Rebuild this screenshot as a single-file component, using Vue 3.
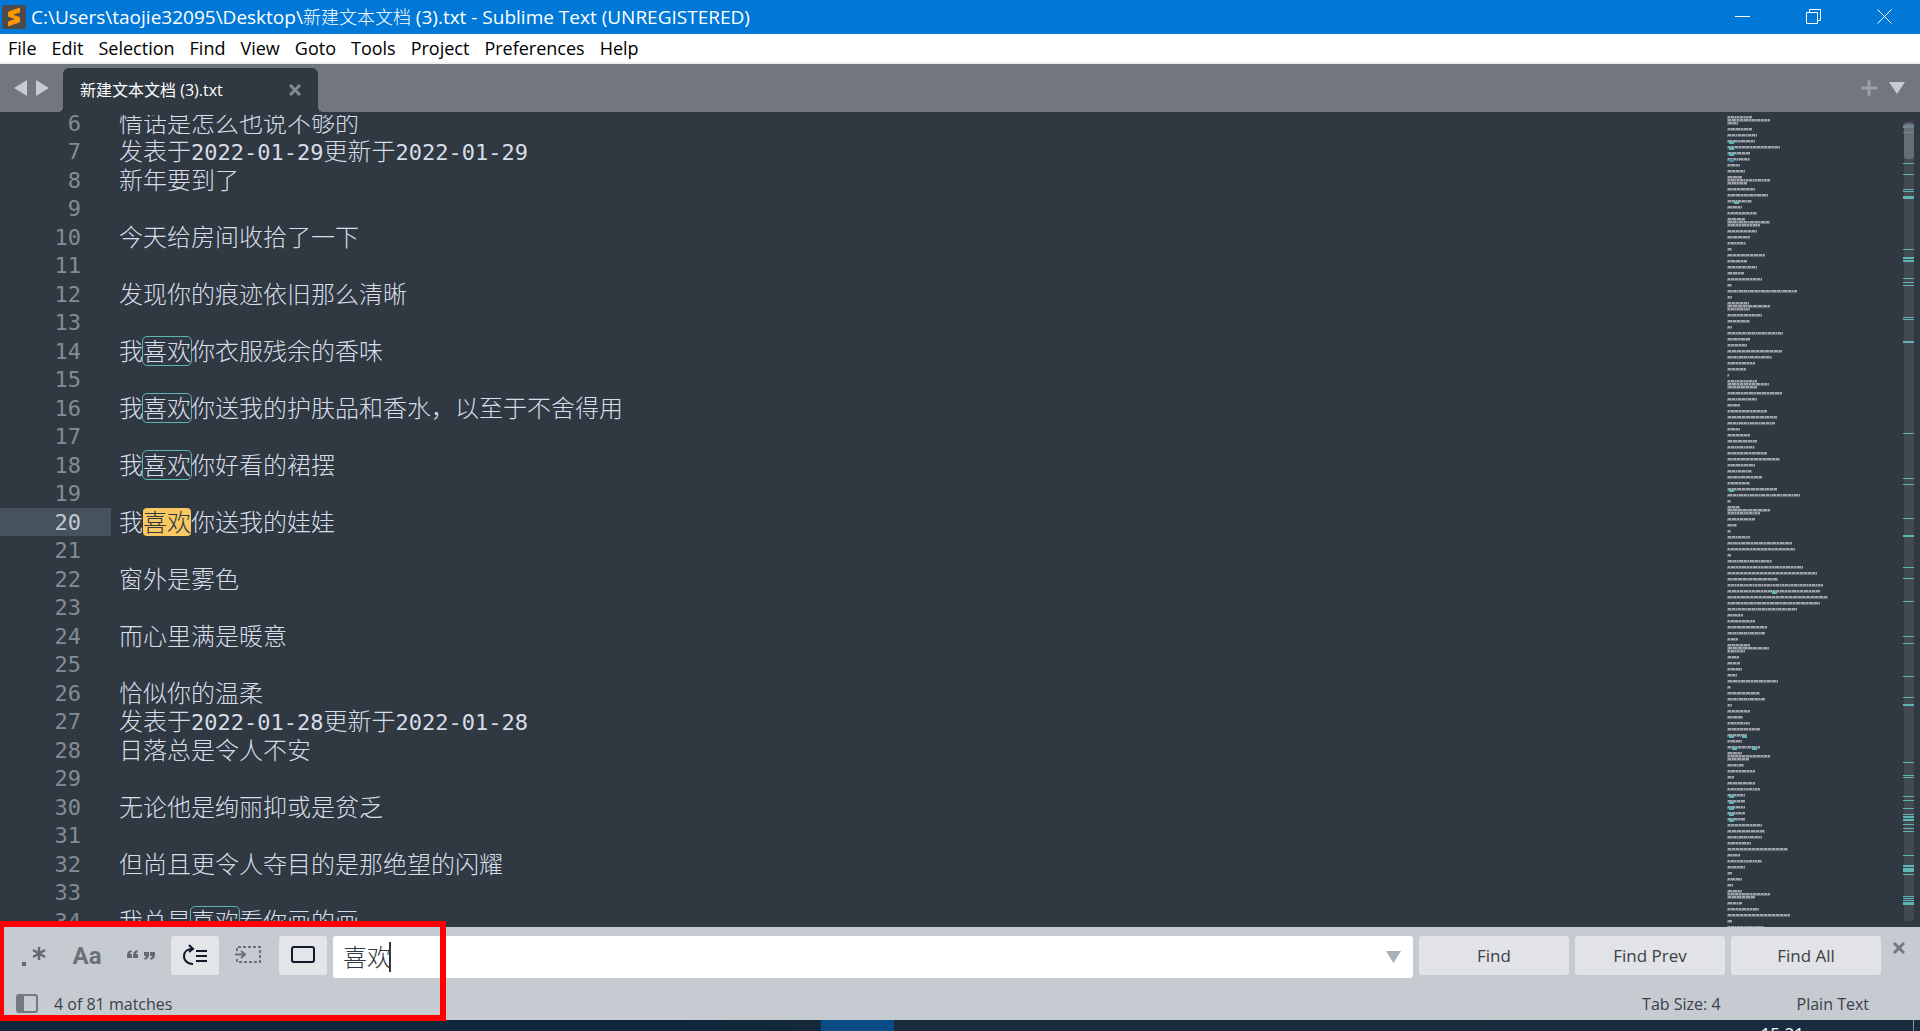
<script setup>
import { ref } from 'vue'

const menus = ['File', 'Edit', 'Selection', 'Find', 'View', 'Goto', 'Tools', 'Project', 'Preferences', 'Help']
const query = ref('喜欢')
const currentLine = 20

const source = [
  '情话是怎么也说不够的',
  '发表于2022-01-29更新于2022-01-29',
  '新年要到了',
  '',
  '今天给房间收拾了一下',
  '',
  '发现你的痕迹依旧那么清晰',
  '',
  '我喜欢你衣服残余的香味',
  '',
  '我喜欢你送我的护肤品和香水，以至于不舍得用',
  '',
  '我喜欢你好看的裙摆',
  '',
  '我喜欢你送我的娃娃',
  '',
  '窗外是雾色',
  '',
  '而心里满是暖意',
  '',
  '恰似你的温柔',
  '发表于2022-01-28更新于2022-01-28',
  '日落总是令人不安',
  '',
  '无论他是绚丽抑或是贫乏',
  '',
  '但尚且更令人夺目的是那绝望的闪耀',
  '',
  '我总是喜欢看你画的画',
]

// Split every line into plain text, date and match pieces
const lines = source.map((text, i) => ({
  no: i + 6,
  parts: text
    .split(/(喜欢|[\d-]+)/)
    .filter(Boolean)
    .map((t) => ({ t, kind: t === '喜欢' ? 'match' : /^[\d-]+$/.test(t) ? 'latin' : 'plain' })),
}))

// Minimap row widths; a negative width sits directly under the row before it
const widths = [
  25, -43, -11, 25, 30, 28, 53, 23, 23, 13, 18, 15, -43, -20, 28, 41, 25, 15, 30, 18, -43, -33, 30, 23, 19, 5, 38,
  20, 30, 17, 35, 5, 70, 5, 22, -43, -23, 35, 23, 5, 56, 23, 20, 55, 45, 28, 19, 2, 30, -42, -30, 55, 30, 13, 40,
  50, 48, 13, 23, 30, 28, 40, 53, 28, 25, 35, 23, 50, 73, 4, 13, -43, -33, 28, 10, 4, 23, 65, 68, 4, 45, 76, 90,
  51, 96, 93, 101, 93, 70, 16, 28, 40, 38, 11, 23, -42, -18, 12, 13, 15, 10, 51, 4, 33, 38, 5, 23, 16, 23, 33, 20,
  15, 33, 15, -43, -22, 17, 28, 7, 28, 33, 18, 18, 18, 18, 18, 35, 38, 35, 24, 61, 13, 35, 18, 5, 15, 6, 15, -43,
  -28, 15, 32, 63, 5, 37,
]
let y = -4
const rows = widths.map((w, i) => {
  y += w < 0 ? 3 : 6
  return { y, w: Math.abs(w), dash: `${2 + (i % 3)} 1 ${3 + (i % 2)} 1 ${1 + (i % 4)} 1` }
})

const hits = [
  [2, 26], [2, 32], [2, 38], [7, 86], [2, 374], [45, 476], [2, 620], [15, 620], [5, 632], [25, 632],
  [2, 680], [2, 686], [2, 692], [2, 698], [2, 704],
]
const ticks = [
  [48], [59], [74], [76], [81, 3], [134], [142, 2], [145, 2], [163], [167], [170], [202], [204], [226, 2], [318],
  [363], [369], [403], [420, 2], [452], [463], [486], [521], [528], [561], [582], [589, 2], [647], [660], [662],
  [681], [685], [693], [699], [701, 2], [704, 2], [709], [713], [716], [740], [750, 2], [753, 4], [759], [781],
  [783], [785], [787, 3],
]
</script>

<template>
  <div class="window">
    <header class="titlebar">
      <svg class="logo" width="24" height="24" viewBox="0 0 24 24">
        <rect width="24" height="24" rx="2" fill="#4b4b4b" />
        <path d="M18 4v5l-7 2.300 6 2c1 .4 1 1 1 2v2.200c0 1-.5 1.500-1.300 1.800L6 23v-5l7-2.400-6-2c-.8-.3-1-.8-1-1.600V9.500c0-1 .5-1.500 1.300-1.800z" transform="translate(0 -1.500)" fill="#ff9800" />
      </svg>
      <h1>C:\Users\taojie32095\Desktop\<span class="cjk">新建文本文档</span> (3).txt - Sublime Text (UNREGISTERED)</h1>
      <div class="controls">
        <button aria-label="Minimize"><svg width="16" height="16"><path d="M0 7.500h15" /></svg></button>
        <button aria-label="Restore"><svg width="16" height="16"><path d="M.5 3.500h11v11H.5zM3.500 3V.5h11v11H12" /></svg></button>
        <button aria-label="Close"><svg width="16" height="16"><path d="M.5.5l14 14M14.500.5l-14 14" /></svg></button>
      </div>
    </header>

    <nav class="menubar">
      <button v-for="m in menus" :key="m">{{ m }}</button>
    </nav>

    <div class="tabs">
      <div class="history">
        <button aria-label="Previous tab"><svg width="13" height="16"><path d="M13 0v16L0 8z" fill="#c6cad1" /></svg></button>
        <button aria-label="Next tab"><svg width="13" height="16"><path d="M0 0v16l13-8z" fill="#c6cad1" /></svg></button>
      </div>
      <div class="tab">
        <span>新建文本文档 (3).txt</span>
        <button aria-label="Close tab"><svg width="12" height="12"><path d="M1 1l10 10M11 1l-10 10" stroke="#848b93" stroke-width="3" /></svg></button>
      </div>
      <div class="tab-actions">
        <button aria-label="New tab"><svg width="16" height="16"><path d="M8 0v16M0 8h16" stroke="#9a9ea5" stroke-width="3" /></svg></button>
        <button aria-label="Tab list"><svg width="16" height="12"><path d="M0 0h16L8 12z" fill="#c6cad1" /></svg></button>
      </div>
    </div>

    <main class="editor">
      <div class="code">
        <div v-for="l in lines" :key="l.no" class="line" :class="{ current: l.no === currentLine }">
          <span class="no">{{ l.no }}</span>
          <span class="text"><span v-for="(p, i) in l.parts" :key="i" :class="p.kind">{{ p.t }}</span></span>
        </div>
      </div>
      <svg class="minimap" width="193" height="812">
        <rect v-for="(r, i) in rows" :key="i" :y="r.y - 1" :width="r.w" height="3" fill="#636a72" />
        <path v-for="(r, i) in rows" :key="'t' + i" :d="`M1 ${r.y}h${r.w - 1}`" stroke="#9da3a9" stroke-width="2" :stroke-dasharray="r.dash" />
        <rect x="2" y="44" width="5" height="3" fill="#4f85a0" />
        <rect v-for="(h, i) in hits" :key="'h' + i" :x="h[0]" :y="h[1]" width="5" height="3" fill="#5fb4b4" />
        <rect x="177" y="6" width="10" height="800" rx="4" fill="#434951" />
        <rect v-for="(t, i) in ticks" :key="'k' + i" x="176" :y="t[0]" width="11" :height="t[1] || 1" fill="#5fb4b4" />
        <rect x="177" y="8" width="10" height="36" rx="3" fill="#676c75" />
        <path d="M176 17.500h11" stroke="#708592" stroke-width="1" />
        <path d="M176 11.500h11" stroke="#708592" stroke-width="3" />
      </svg>
    </main>

    <footer class="panel">
      <form class="find" @submit.prevent>
        <button type="button" class="toggle" aria-label="Regular expression">
          <svg width="48" height="39"><path d="M13 26h4v4h-4z" fill="#626971" /><path d="M30 11v13M24 14l12 7M36 14l-12 7" stroke="#626971" stroke-width="2.500" /></svg>
        </button>
        <button type="button" class="toggle aa">Aa</button>
        <button type="button" class="toggle" aria-label="Whole word">
          <svg width="48" height="39" fill="#626971">
            <path d="M14 14c-3 1-4 3-4 5v3h5v-4h-2c0-1 1-2 2-2zM20 14c-3 1-4 3-4 5v3h5v-4h-2c0-1 1-2 2-2z" />
            <path d="M28 24c3-1 4-3 4-5v-3h-5v4h2c0 1-1 2-2 2zM34 24c3-1 4-3 4-5v-3h-5v4h2c0 1-1 2-2 2z" />
          </svg>
        </button>
        <button type="button" class="toggle on" aria-label="Wrap">
          <svg width="48" height="39" fill="none" stroke="#15172b" stroke-width="2"><path d="M22 28c-5 0-9-3-9-8 0-4 3-7 8-7" /><path d="M18 9l4 4-4 3" /><path d="M25 15h11M25 20h11M25 25h11" /></svg>
        </button>
        <button type="button" class="toggle" aria-label="In selection">
          <svg width="48" height="39" fill="none" stroke="#6b7179" stroke-width="2"><path d="M12 15v-4h23v15H12v-4" stroke-dasharray="3 2" /><path d="M10 18.500h9M16 15l4 3.500-4 3.500" /></svg>
        </button>
        <button type="button" class="toggle on" aria-label="Highlight matches">
          <svg width="48" height="39" fill="none" stroke="#15172b" stroke-width="2"><rect x="13" y="11" width="22" height="15" rx="2" /></svg>
        </button>
        <div class="field">
          <input v-model="query" aria-label="Find what" type="text" />
          <span class="caret"></span>
          <button type="button" aria-label="Find history"><svg width="15" height="12"><path d="M0 0h15L7.500 12z" fill="#a9afb7" /></svg></button>
        </div>
        <button type="button" class="action">Find</button>
        <button type="button" class="action">Find Prev</button>
        <button type="button" class="action">Find All</button>
        <button type="button" class="dismiss" aria-label="Close panel"><svg width="12" height="12"><path d="M1 1l10 10M11 1l-10 10" stroke="#737980" stroke-width="3" /></svg></button>
      </form>
      <div class="status">
        <button aria-label="Side bar"><svg width="22" height="19"><rect x="1" y="1" width="20" height="17" rx="2" fill="none" stroke="#737980" stroke-width="2" /><path d="M1 1h7v17H1z" fill="#737980" /></svg></button>
        <span class="matches">4 of 81 matches</span>
        <button class="tabsize">Tab Size: 4</button>
        <button class="syntax">Plain Text</button>
      </div>
      <div class="callout"></div>
    </footer>

    <div class="taskbar">
      <span class="task"></span>
      <span class="clock">15:21</span>
      <span class="peek"></span>
    </div>
  </div>
</template>

<style>
body {
  margin: 0;
  overflow: hidden;
}
</style>

<style scoped>
.window {
  display: flex;
  flex-direction: column;
  height: 100vh;
  overflow: hidden;
  background: #303841;
  font-family: "Open Sans", "Noto Sans CJK SC", sans-serif;
}
button {
  display: flex;
  align-items: center;
  justify-content: center;
  margin: 0;
  padding: 0;
  border: 0;
  background: none;
  color: inherit;
  font: inherit;
}
svg {
  display: block;
}

.titlebar {
  display: flex;
  flex: none;
  align-items: center;
  height: 34px;
  padding-left: 2px;
  background: #0078d7;
  color: #fff;
}
.titlebar h1 {
  flex: 1;
  margin: 0 0 0 5px;
  font-size: 19px;
  font-weight: 400;
  line-height: 34px;
  white-space: nowrap;
}
.cjk {
  font-size: 18px;
  font-weight: 300;
}
.controls {
  display: flex;
}
.controls button {
  width: 71px;
  height: 34px;
}
.controls path {
  fill: none;
  stroke: #fff;
}

.menubar {
  display: flex;
  flex: none;
  gap: 15px;
  height: 28px;
  padding-left: 8px;
  border-bottom: 2px solid #f0f0f0;
  background: #fff;
  color: #000;
  font-size: 18px;
}

.tabs {
  display: flex;
  flex: none;
  align-items: flex-end;
  height: 48px;
  background: #72767f;
}
.history {
  display: flex;
  gap: 9px;
  width: 49px;
  height: 48px;
  padding-left: 14px;
}
.tab {
  position: relative;
  display: flex;
  align-items: center;
  justify-content: space-between;
  box-sizing: border-box;
  width: 255px;
  height: 44px;
  padding: 0 17px;
  border-radius: 6px 6px 0 0;
  background: #303841;
  color: #fff;
  font-size: 16px;
}
.tab span {
  padding-bottom: 2px;
}
.tab::before,
.tab::after {
  position: absolute;
  bottom: 0;
  width: 5px;
  height: 5px;
  content: "";
}
.tab::before {
  right: 100%;
  background: radial-gradient(circle at 0 0, transparent 5px, #303841 5px);
}
.tab::after {
  left: 100%;
  background: radial-gradient(circle at 100% 0, transparent 5px, #303841 5px);
}
.tab-actions {
  display: flex;
  gap: 12px;
  height: 48px;
  margin-left: auto;
  padding-right: 15px;
}

.editor {
  display: flex;
  flex: 1;
  justify-content: space-between;
  min-height: 0;
  margin-top: 3px;
  overflow: hidden;
}
.code {
  flex: 1;
  margin-top: -6px;
}
.line {
  display: flex;
  height: 28px;
  color: #d8dee9;
}
.line:nth-child(even) {
  height: 29px;
}
.no {
  box-sizing: border-box;
  width: 111px;
  padding-right: 30px;
  color: #848b95;
  font-family: "DejaVu Sans Mono", monospace;
  font-size: 22px;
  line-height: 30px;
  text-align: right;
}
.current .no {
  background: #46525c;
  color: #c3c9d3;
}
.text {
  padding-left: 8px;
  font-family: "Noto Sans CJK SC", sans-serif;
  font-size: 24px;
  font-weight: 300;
  line-height: 26px;
  white-space: pre;
}
.latin {
  font-family: "DejaVu Sans Mono", monospace;
  font-size: 22px;
  font-weight: 400;
}
.match {
  display: inline-block;
  height: 28px;
  border-radius: 4px;
  outline: 1px solid #5fb4b4;
}
.current .match {
  background: #fac863;
  color: #303841;
  outline: 0;
}
.minimap {
  flex: none;
}

.panel {
  position: relative;
  flex: none;
  background: #c6cad1;
  color: #3b4148;
  font-size: 16px;
}
.find {
  display: flex;
  gap: 6px;
  padding: 9px 13px 9px 9px;
}
.toggle {
  width: 48px;
  height: 39px;
  border-radius: 3px;
}
.toggle.on {
  background: #e3e5e9;
}
.aa {
  color: #6b7179;
  font-family: Roboto, sans-serif;
  font-size: 24px;
  font-weight: 700;
}
.field {
  display: flex;
  flex: 1;
  align-items: center;
  height: 42px;
  padding: 0 12px 0 10px;
  border-radius: 3px;
  background: #fff;
}
.field input {
  box-sizing: border-box;
  width: 46px;
  height: 42px;
  padding: 0 0 4px;
  border: 0;
  outline: 0;
  background: none;
  color: #303841;
  font-family: "Noto Sans CJK SC", sans-serif;
  font-size: 24px;
  font-weight: 300;
}
.caret {
  width: 2px;
  height: 30px;
  background: #303841;
}
.field button {
  margin-left: auto;
}
.action {
  width: 150px;
  height: 39px;
  border-radius: 3px;
  background: #e1e3e7;
  font-size: 17px;
}
.dismiss {
  width: 12px;
  height: 24px;
  margin-left: 6px;
  margin-right: 2px;
}
.status {
  display: flex;
  align-items: center;
  height: 33px;
  padding: 0 51px 0 16px;
}
.matches {
  flex: 1;
  margin-left: 16px;
}
.syntax {
  margin-left: 76px;
}
.callout {
  position: absolute;
  top: -6px;
  bottom: -1px;
  left: -2px;
  z-index: 1;
  box-sizing: border-box;
  width: 448px;
  border: 6px solid #f00;
  pointer-events: none;
}

.taskbar {
  display: flex;
  flex: none;
  height: 11px;
  overflow: hidden;
  background: linear-gradient(90deg, #10263a, #10263a 35%, #1a2b3c 50%, #192c40);
  color: #fff;
}
.task {
  width: 73px;
  margin-left: 821px;
  background: #084b85;
}
.clock {
  margin-left: auto;
  padding-top: 4px;
  font-size: 17px;
  line-height: 20px;
}
.peek {
  width: 6px;
  margin-left: 109px;
  border-left: 1px solid #8a939c;
}
</style>
